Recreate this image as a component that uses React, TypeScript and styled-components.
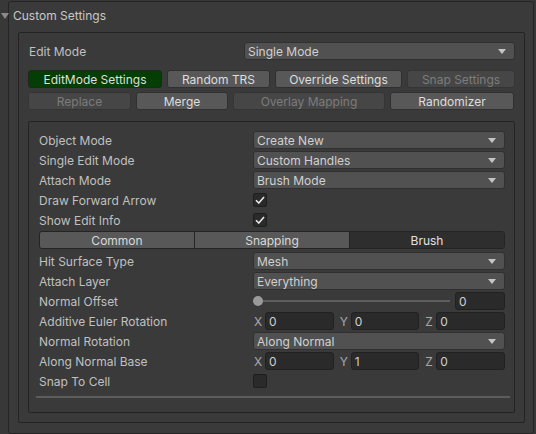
import React from "react";
import styled, { createGlobalStyle } from "styled-components";

const GlobalStyle = createGlobalStyle`
  html, body {
    margin: 0;
    padding: 0;
    background: #383838;
  }
  body {
    font-family: Inter, "Noto Sans", sans-serif;
    font-size: 12px;
    color: #c0c0c0;
  }
`;

const Page = styled.div`
  width: 536px;
  height: 434px;
  box-sizing: border-box;
  padding: 1px 0 0 8px;
  overflow: hidden;
`;

const Frame = styled.div`
  width: 526px;
  height: 433px;
  box-sizing: border-box;
  border: 1px solid #242424;
  border-radius: 3px;
  background: #3a3a3a;
  padding: 0 8px 10px 9px;
  display: flex;
  flex-direction: column;
`;

const Foldout = styled.div`
  height: 30px;
  display: flex;
  align-items: center;
  gap: 4px;
  margin-left: -16px;
  padding-bottom: 3px;
  box-sizing: border-box;
  font-size: 12px;
  color: #c8c8c8;
`;

const FoldArrow = styled.span`
  width: 0;
  height: 0;
  border-left: 4px solid transparent;
  border-right: 4px solid transparent;
  border-top: 6px solid #8a8a8a;
  margin-left: -1px;
`;

const Box = styled.div<{ $grow?: boolean }>`
  box-sizing: border-box;
  border: 1px solid #232323;
  border-radius: 2px;
  display: flex;
  flex-direction: column;
  ${(p) => (p.$grow ? "flex: 1;" : "")}
`;

const OuterBox = styled(Box)`
  padding: 9px 9px 9px 9px;
`;

const InnerBox = styled(Box)`
  margin-top: 7px;
  padding: 8px 9px 0 10px;
`;

const TopRow = styled.div`
  height: 18px;
  display: flex;
  align-items: center;
  justify-content: space-between;
  margin-bottom: 10px;
`;

const TopLabel = styled.span`
  padding-left: 1px;
`;

const ButtonRow = styled.div`
  display: flex;
  gap: 5px;
  margin-bottom: 4px;
`;

type ButtonKind = "normal" | "active" | "disabled";

const ToolButton = styled.div<{ $w: number; $kind: ButtonKind }>`
  width: ${(p) => p.$w}px;
  height: 18px;
  box-sizing: border-box;
  border-radius: 3px;
  display: flex;
  align-items: center;
  justify-content: center;
  border: 1px solid
    ${(p) => (p.$kind === "active" ? "#1c2a1c" : p.$kind === "disabled" ? "#353535" : "#303030")};
  background: ${(p) =>
    p.$kind === "active" ? "#053e05" : p.$kind === "disabled" ? "#464646" : "#585858"};
  color: ${(p) => (p.$kind === "disabled" ? "#7c7c7c" : "#dedede")};
`;

const Row = styled.div`
  height: 20px;
  display: flex;
  align-items: center;
`;

const Label = styled.span`
  width: 214px;
  flex-shrink: 0;
`;

const Control = styled.div`
  flex: 1;
  display: flex;
  align-items: center;
  min-width: 0;
`;

const DropdownBox = styled.div<{ $w?: number }>`
  ${(p) => (p.$w ? `width: ${p.$w}px;` : "flex: 1;")}
  height: 18px;
  box-sizing: border-box;
  border: 1px solid #303030;
  border-radius: 3px;
  background: #515151;
  display: flex;
  align-items: center;
  justify-content: space-between;
  padding: 0 8px 0 3px;
  color: #d0d0d0;
`;

const DropArrow = styled.span`
  width: 0;
  height: 0;
  border-left: 4px solid transparent;
  border-right: 4px solid transparent;
  border-top: 5px solid #c4c4c4;
`;

const CheckBox = styled.div`
  width: 14px;
  height: 14px;
  box-sizing: border-box;
  border: 1px solid #1e1e1e;
  border-radius: 2px;
  background: #2a2a2a;
  display: flex;
  align-items: center;
  justify-content: center;
`;

const Tabs = styled.div`
  height: 18px;
  margin: 1px 0 2px;
  display: flex;
  box-sizing: border-box;
  border: 1px solid #242424;
  border-radius: 3px;
  overflow: hidden;
`;

const Tab = styled.div<{ $selected?: boolean }>`
  flex: 1;
  display: flex;
  align-items: center;
  justify-content: center;
  background: ${(p) => (p.$selected ? "#2e2e2e" : "#585858")};
  color: ${(p) => (p.$selected ? "#e2e2e2" : "#d8d8d8")};
  & + & {
    border-left: 1px solid #242424;
  }
`;

const Field = styled.div<{ $w?: number }>`
  ${(p) => (p.$w ? `width: ${p.$w}px;` : "flex: 1;")}
  height: 18px;
  box-sizing: border-box;
  border: 1px solid #212121;
  border-radius: 3px;
  background: #2a2a2a;
  display: flex;
  align-items: center;
  padding-left: 3px;
  color: #d0d0d0;
`;

const SliderTrack = styled.div`
  flex: 1;
  height: 18px;
  position: relative;
  margin-right: 5px;
  display: flex;
  align-items: center;
  &::before {
    content: "";
    flex: 1;
    height: 2px;
    margin-left: 5px;
    background: #5e5e5e;
  }
`;

const SliderThumb = styled.span`
  position: absolute;
  left: 0;
  top: 4px;
  width: 10px;
  height: 10px;
  border-radius: 50%;
  background: #9a9a9a;
`;

const VectorGroup = styled.div`
  flex: 1;
  display: flex;
  align-items: center;
  & + & {
    margin-left: 5px;
  }
`;

const AxisLabel = styled.span`
  width: 12px;
  flex-shrink: 0;
  padding-left: 1px;
  box-sizing: border-box;
  color: #a8a8a8;
`;

const Divider = styled.div`
  height: 2px;
  margin: 5px -5px 0 -3px;
  background: #5c5c5c;
`;

function Check() {
  return (
    <svg width="10" height="8" viewBox="0 0 10 8">
      <path d="M1 4.2 L3.8 7 L9 1" fill="none" stroke="#e8e8e8" strokeWidth="1.6" />
    </svg>
  );
}

function Dropdown({ value, w }: { value: string; w?: number }) {
  return (
    <DropdownBox $w={w}>
      <span>{value}</span>
      <DropArrow />
    </DropdownBox>
  );
}

function Vector({ values }: { values: string[] }) {
  return (
    <Control>
      {["X", "Y", "Z"].map((axis, i) => (
        <VectorGroup key={axis}>
          <AxisLabel>{axis}</AxisLabel>
          <Field>{values[i]}</Field>
        </VectorGroup>
      ))}
    </Control>
  );
}

const firstButtons: { text: string; w: number; kind: ButtonKind }[] = [
  { text: "EditMode Settings", w: 134, kind: "active" },
  { text: "Random TRS", w: 103, kind: "normal" },
  { text: "Override Settings", w: 127, kind: "normal" },
  { text: "Snap Settings", w: 108, kind: "disabled" },
];

const secondButtons: { text: string; w: number; kind: ButtonKind }[] = [
  { text: "Replace", w: 103, kind: "disabled" },
  { text: "Merge", w: 92, kind: "normal" },
  { text: "Overlay Mapping", w: 152, kind: "disabled" },
  { text: "Randomizer", w: 124, kind: "normal" },
];

export default function App() {
  return (
    <>
      <GlobalStyle />
      <Page>
        <Frame>
          <Foldout>
            <FoldArrow />
            <span>Custom Settings</span>
          </Foldout>
          <OuterBox $grow>
            <TopRow>
              <TopLabel>Edit Mode</TopLabel>
              <Dropdown value="Single Mode" w={271} />
            </TopRow>
            <ButtonRow>
              {firstButtons.map((b) => (
                <ToolButton key={b.text} $w={b.w} $kind={b.kind}>
                  {b.text}
                </ToolButton>
              ))}
            </ButtonRow>
            <ButtonRow>
              {secondButtons.map((b) => (
                <ToolButton key={b.text} $w={b.w} $kind={b.kind}>
                  {b.text}
                </ToolButton>
              ))}
            </ButtonRow>

            <InnerBox $grow>
              <Row>
                <Label>Object Mode</Label>
                <Control>
                  <Dropdown value="Create New" />
                </Control>
              </Row>
              <Row>
                <Label>Single Edit Mode</Label>
                <Control>
                  <Dropdown value="Custom Handles" />
                </Control>
              </Row>
              <Row>
                <Label>Attach Mode</Label>
                <Control>
                  <Dropdown value="Brush Mode" />
                </Control>
              </Row>
              <Row>
                <Label>Draw Forward Arrow</Label>
                <Control>
                  <CheckBox>
                    <Check />
                  </CheckBox>
                </Control>
              </Row>
              <Row>
                <Label>Show Edit Info</Label>
                <Control>
                  <CheckBox>
                    <Check />
                  </CheckBox>
                </Control>
              </Row>
              <Tabs>
                <Tab>Common</Tab>
                <Tab>Snapping</Tab>
                <Tab $selected>Brush</Tab>
              </Tabs>
              <Row>
                <Label>Hit Surface Type</Label>
                <Control>
                  <Dropdown value="Mesh" />
                </Control>
              </Row>
              <Row>
                <Label>Attach Layer</Label>
                <Control>
                  <Dropdown value="Everything" />
                </Control>
              </Row>
              <Row>
                <Label>Normal Offset</Label>
                <Control>
                  <SliderTrack>
                    <SliderThumb />
                  </SliderTrack>
                  <Field $w={50}>0</Field>
                </Control>
              </Row>
              <Row>
                <Label>Additive Euler Rotation</Label>
                <Vector values={["0", "0", "0"]} />
              </Row>
              <Row>
                <Label>Normal Rotation</Label>
                <Control>
                  <Dropdown value="Along Normal" />
                </Control>
              </Row>
              <Row>
                <Label>Along Normal Base</Label>
                <Vector values={["0", "1", "0"]} />
              </Row>
              <Row>
                <Label>Snap To Cell</Label>
                <Control>
                  <CheckBox />
                </Control>
              </Row>
              <Divider />
            </InnerBox>
          </OuterBox>
        </Frame>
      </Page>
    </>
  );
}
